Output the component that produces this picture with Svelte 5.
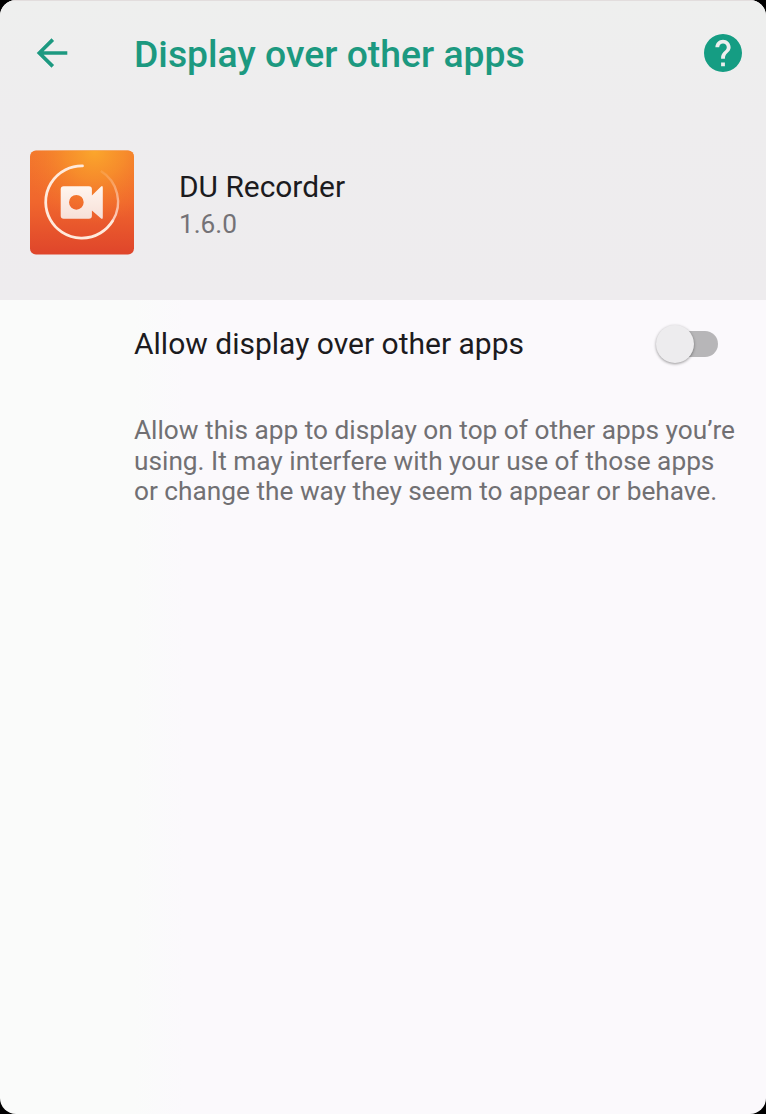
<script>
  let allowed = $state(false);
</script>

<main class="screen">
  <header>
    <div class="bar">
      <svg class="back" viewBox="0 0 32 30" aria-label="Back" role="img">
        <path d="M31.300 15H3.300M16.800 1.600L3.300 15l13.500 13.400" />
      </svg>
      <h1>Display over other apps</h1>
      <svg class="help" viewBox="2 2 20 20" aria-label="Help" role="img">
        <path d="M12 2C6.48 2 2 6.48 2 12s4.48 10 10 10 10-4.48 10-10S17.52 2 12 2zm1 17h-2v-2h2v2zm2.07-7.75l-.9.92C13.45 12.9 13 13.5 13 15h-2v-.5c0-1.1.45-2.1 1.17-2.83l1.24-1.26c.37-.36.59-.86.59-1.41 0-1.1-.9-2-2-2s-2 .9-2 2H8c0-2.21 1.79-4 4-4s4 1.79 4 4c0 .88-.36 1.68-.93 2.25z" />
      </svg>
    </div>
    <div class="app">
      <svg class="logo" viewBox="0 0 105 105" aria-hidden="true">
        <defs>
          <linearGradient id="base" x1="0" y1="0" x2="0" y2="1">
            <stop offset="0" stop-color="#f3782c" />
            <stop offset=".5" stop-color="#f0662d" />
            <stop offset="1" stop-color="#df452b" />
          </linearGradient>
          <radialGradient id="glow" cx=".62" cy="0" r=".7">
            <stop offset="0" stop-color="#fba72c" />
            <stop offset=".4" stop-color="#f8952b" stop-opacity=".75" />
            <stop offset="1" stop-color="#f3782c" stop-opacity="0" />
          </radialGradient>
          <linearGradient id="fade" gradientUnits="userSpaceOnUse" x1="72" y1="19" x2="88" y2="66">
            <stop offset="0" stop-color="#ffd0a8" stop-opacity=".15" />
            <stop offset="1" stop-color="#ffdcd0" stop-opacity=".85" />
          </linearGradient>
          <linearGradient id="body" x1="0" y1="0" x2="0" y2="1">
            <stop offset="0" stop-color="#fff5ee" />
            <stop offset="1" stop-color="#f7e0d8" />
          </linearGradient>
        </defs>
        <rect width="105" height="105" rx="6" fill="url(#base)" />
        <rect width="105" height="105" rx="6" fill="url(#glow)" />
        <path d="M53 15.500A36.500 36.500 0 1 0 83.500 71" fill="none" stroke="#ffeadc" stroke-width="2.800" stroke-linecap="round" />
        <path d="M71.500 20.800A36.500 36.500 0 0 1 83.500 71" fill="none" stroke="url(#fade)" stroke-width="2.400" />
        <path fill="url(#body)" fill-rule="evenodd" d="M34 36H59.500Q62.500 36 62.500 39V45.500L71.500 36.500Q73.500 35 73.500 37.500V67.500Q73.500 70 71.500 68.500L62.500 60.500V66Q62.500 69 59.500 69H34Q31 69 31 66V39Q31 36 34 36ZM46.800 44.900a7.400 7.400 0 1 0 0 14.800a7.400 7.400 0 1 0 0-14.800Z" />
      </svg>
      <div class="names">
        <h2>DU Recorder</h2>
        <span class="version">1.6.0</span>
      </div>
    </div>
  </header>

  <section>
    <div class="setting">
      <span>Allow display over other apps</span>
      <button class="switch" class:on={allowed} role="switch" aria-checked={allowed} aria-label="Allow display over other apps" onclick={() => (allowed = !allowed)}>
        <i></i>
      </button>
    </div>
    <p>Allow this app to display on top of other apps you’re<br />using. It may interfere with your use of those apps<br />or change the way they seem to appear or behave.</p>
  </section>
</main>

<style>
  :global(body) {
    background: #000;
  }
  .screen {
    box-sizing: border-box;
    width: 766px;
    height: 1114px;
    border-radius: 16px;
    overflow: hidden;
    background: linear-gradient(90deg, #fafbfa 0 134px, #fbf9fc 184px);
    font-family: Roboto, sans-serif;
    color: #1c1b1e;
  }
  header {
    box-sizing: border-box;
    height: 300px;
    background: linear-gradient(#eeefee, #eeedee 110px, #eeecee);
    border-top: 1px solid #e2dddd;
  }
  .bar {
    display: flex;
    align-items: center;
    height: 103px;
    padding: 0 24px 0 36px;
  }
  .back {
    width: 32px;
    height: 30px;
    fill: none;
    stroke: #1c9980;
    stroke-width: 3.6;
  }
  h1 {
    flex: 1;
    margin: 2px 0 0 66px;
    font-size: 37.350px;
    font-weight: 500;
    line-height: 44px;
    color: #1c9980;
    white-space: nowrap;
  }
  .help {
    width: 38px;
    height: 38px;
    fill: #159d83;
  }
  .app {
    display: flex;
    padding: 46px 0 0 30px;
  }
  .logo {
    width: 104px;
    height: 105px;
  }
  .names {
    display: flex;
    flex-direction: column;
    margin: 19px 0 0 45px;
  }
  h2 {
    margin: 0;
    font-size: 29.900px;
    font-weight: 400;
    line-height: 36px;
  }
  .version {
    font-size: 26.200px;
    line-height: 38px;
    color: #747276;
  }
  .setting {
    display: flex;
    align-items: center;
    justify-content: space-between;
    height: 88px;
    padding: 0 48px 0 134px;
    font-size: 30px;
  }
  .setting span {
    padding-bottom: 2px;
  }
  .switch {
    display: grid;
    align-items: center;
    width: 62px;
    height: 40px;
    padding: 0;
    border: 0;
    background: none;
  }
  .switch::before {
    content: "";
    grid-area: 1 / 1;
    height: 26px;
    margin-left: 4px;
    border-radius: 13px;
    background: #b7b6b8;
  }
  .switch i {
    grid-area: 1 / 1;
    z-index: 1;
    width: 38px;
    height: 38px;
    border-radius: 50%;
    background: #edecee;
    box-shadow: 0 1px 3px #0006;
  }
  .switch.on i {
    margin-left: auto;
    background: #159d83;
  }
  p {
    margin: 27px 0 0 134px;
    font-size: 26.240px;
    line-height: 30.500px;
    color: #717073;
    white-space: nowrap;
  }
</style>
